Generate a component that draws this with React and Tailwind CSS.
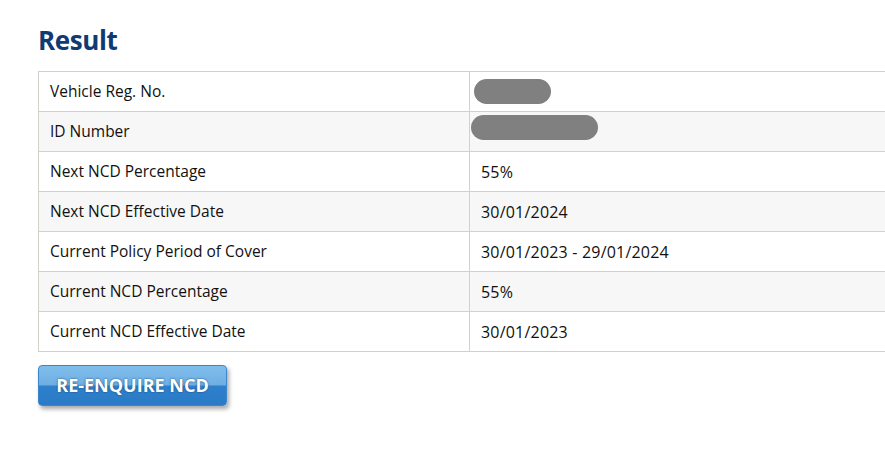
import React from 'react';

const rows = [
    { label: 'Vehicle Reg. No.', blur: 'w-[77px] -ml-[7px] -mt-[1px]' },
    { label: 'ID Number', blur: 'w-[127px] -ml-[10px] -mt-[8px]' },
    { label: 'Next NCD Percentage', value: '55%' },
    { label: 'Next NCD Effective Date', value: '30/01/2024' },
    { label: 'Current Policy Period of Cover', value: '30/01/2023 - 29/01/2024' },
    { label: 'Current NCD Percentage', value: '55%' },
    { label: 'Current NCD Effective Date', value: '30/01/2023' },
];

const App = () => {
    return (
        <div className="w-[885px] h-[461px] overflow-hidden bg-white font-['Open_Sans',sans-serif] text-[#111]">
            <div className="pl-[38px] pt-[22px]">
                {/* Heading */}
                <h1 className="text-[26px] font-bold text-[#0f3a73] leading-[36px] mb-[13px] tracking-[-0.4px]">Result</h1>

                {/* Result table */}
                <table className="w-[862px] border-collapse text-[15.5px]">
                    <tbody>
                        {rows.map((row, i) => (
                            <tr key={row.label} className={i % 2 === 1 ? 'bg-[#f7f7f7]' : 'bg-white'}>
                                <td className="w-[431px] h-[40px] border border-[#d3d1ca] pl-[11px] py-0">{row.label}</td>
                                <td className="h-[40px] border border-[#d3d1ca] pl-[11px] py-0 text-[16px] tracking-[0.2px]">
                                    {row.blur ? (
                                        <div className={`h-[25px] rounded-full bg-[#808080] ${row.blur}`}></div>
                                    ) : (
                                        row.value
                                    )}
                                </td>
                            </tr>
                        ))}
                    </tbody>
                </table>

                {/* Action */}
                <button
                    type="button"
                    className="mt-[13px] w-[189px] h-[41px] rounded-[4px] bg-[linear-gradient(to_bottom,#80bdeb_0%,#6eafe3_48%,#2f80cc_52%,#2a7ac6_100%)] border border-[#3c86cc] shadow-[2px_3px_4px_rgba(0,0,0,0.35)] text-white font-bold text-[18px] tracking-[0px] [text-shadow:0_0_2px_#1d3f73]"
                >
                    RE-ENQUIRE NCD
                </button>
            </div>
        </div>
    );
};

export default App;
